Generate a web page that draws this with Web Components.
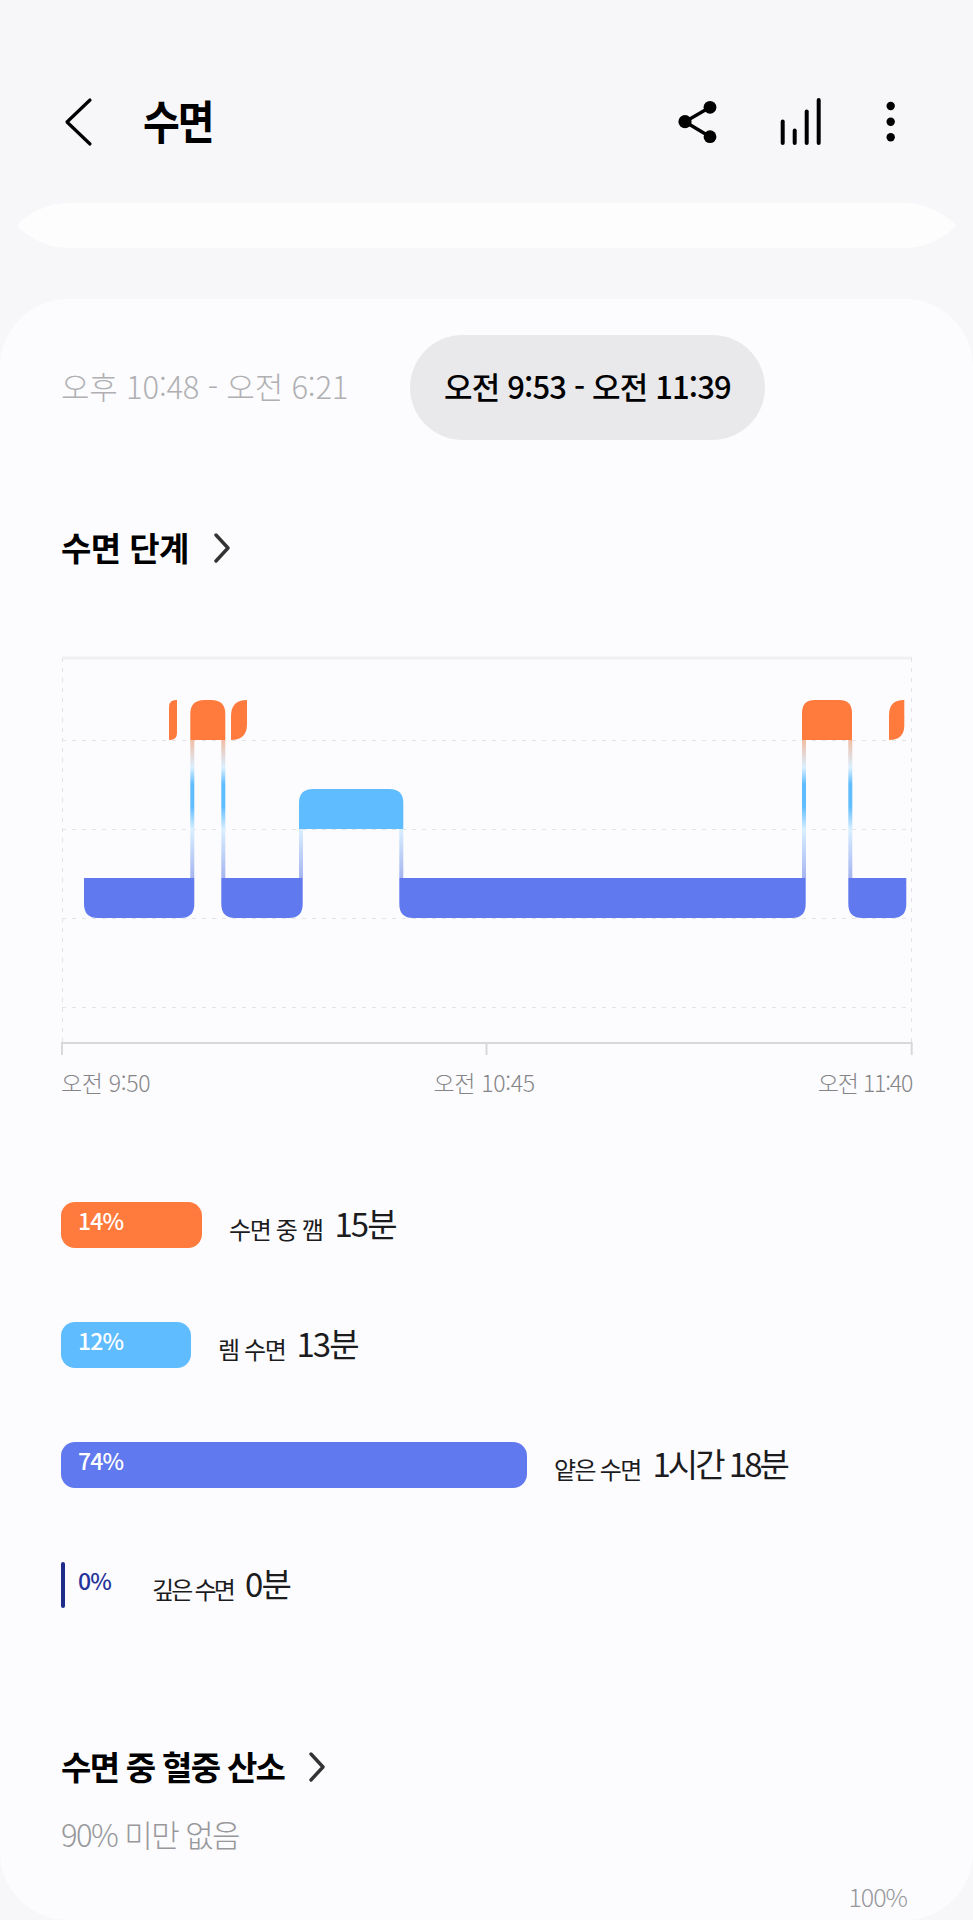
<!DOCTYPE html>
<html lang="ko">
<head>
<meta charset="utf-8">
<title>수면</title>
<style>
  html, body { margin: 0; height: 1920px; overflow: hidden; background: #f7f7f9; }
  body { font-family: "Noto Sans CJK KR", "Noto Sans", sans-serif; color: #000; }
</style>
</head>
<body>
<sleep-page>
  <top-bar slot="top">수면</top-bar>
  <session-tabs>
    <span slot="off">오후 10:48 - 오전 6:21</span>
    <span slot="on">오전 9:53 - 오전 11:39</span>
  </session-tabs>
  <section-title style="margin-top:88px;letter-spacing:-.6px">수면 단계</section-title>
  <stage-chart></stage-chart>
  <stage-row style="margin-top:105px" box="141" fill="141" color="#ff7a3d" pct="14%" label="수면 중 깸" value="15분"></stage-row>
  <stage-row box="130" fill="130" color="#5fbcff" pct="12%" label="렘 수면" value="13분" gap="11"></stage-row>
  <stage-row box="466" fill="466" color="#6079ee" pct="74%" label="얕은 수면" value="1시간 18분" tight="-3" squeeze="-1.7"></stage-row>
  <stage-row box="64" fill="4" color="#1f2d8a" pct="0%" ink="#25349a" label="깊은 수면" value="0분" squeeze="-2.8"></stage-row>
  <section-title style="margin-top:139px;letter-spacing:-1.7px">수면 중 혈중 산소</section-title>
  <note-line>90% 미만 없음</note-line>
  <scale-end>100%</scale-end>
</sleep-page>

<script>
'use strict';

class SleepPage extends HTMLElement {
  constructor() {
    super();
    this.attachShadow({ mode: 'open' }).innerHTML = `
      <style>
        :host { display: block; }
        .strip { height: 45px; margin: 0 16px 51px; background: #fdfdfe;
                 clip-path: path("M54 0 H887 C910 0 927 10 938 20 Q941 22.5 938 25 C927 35 910 45 887 45 H54 C31 45 14 35 3 25 Q0 22.5 3 20 C14 10 31 0 54 0Z"); }
        .card { height: 1621px; box-sizing: border-box; padding: 36px 60px 0 61px; background: #fcfcfe;
                border-radius: 68px; display: flex; flex-direction: column; overflow: hidden; }
      </style>
      <slot name="top"></slot>
      <div class="strip"></div>
      <div class="card"><slot></slot></div>`;
  }
}

class TopBar extends HTMLElement {
  constructor() {
    super();
    this.attachShadow({ mode: 'open' }).innerHTML = `
      <style>
        :host { display: block; height: 203px; box-sizing: border-box; padding-top: 82px; }
        .row { display: flex; align-items: center; height: 80px; padding-left: 60px; }
        .title { margin-left: 47px; font-size: 40px; font-weight: 700; letter-spacing: -2px; line-height: 76px; height: 80px; transform: scaleY(1.15); }
        svg { display: block; }
        .back { width: 36px; height: 60px; }
        .acts { margin-left: auto; margin-right: 68px; width: 230px; height: 60px; }
      </style>
      <div class="row">
        <svg class="back" viewBox="0 0 36 60" fill="none" stroke="#000" stroke-width="3.2" stroke-linecap="round" stroke-linejoin="round">
          <path d="M30 8 L7 30 L30 52"/>
        </svg>
        <span class="title"><slot></slot></span>
        <svg class="acts" viewBox="0 0 230 60">
          <g stroke="#000" stroke-width="3.4" fill="none">
            <path d="M35 15.3 L10 29.7 L35 44.7"/>
          </g>
          <g fill="#000">
            <circle cx="35" cy="15.3" r="6.4"/><circle cx="10" cy="29.7" r="6.6"/><circle cx="35" cy="44.7" r="6.4"/>
          </g>
          <g stroke="#000" stroke-width="4" stroke-linecap="round">
            <path d="M107.7 29.5 V51"/><path d="M119.7 38.5 V51"/><path d="M131.7 19.5 V51"/><path d="M143.7 8 V51"/>
          </g>
          <g fill="#000">
            <circle cx="215.7" cy="14" r="4.2"/><circle cx="215.7" cy="29.7" r="4.2"/><circle cx="215.7" cy="45.3" r="4.2"/>
          </g>
        </svg>
      </div>`;
  }
}

class SessionTabs extends HTMLElement {
  constructor() {
    super();
    this.attachShadow({ mode: 'open' }).innerHTML = `
      <style>
        :host { display: flex; align-items: center; height: 105px; flex: none; font-size: 31px; }
        .off { color: #b0b0b3; width: 349px; font-weight: 300; white-space: nowrap; letter-spacing: -.2px; padding-bottom: 4px; }
        .on { width: 355px; height: 101px; padding-bottom: 4px; background: #e9e9eb; border-radius: 52.5px; display: flex;
              align-items: center; justify-content: center; font-weight: 500; white-space: nowrap; letter-spacing: -.85px; }
      </style>
      <span class="off"><slot name="off"></slot></span>
      <span class="on"><slot name="on"></slot></span>`;
  }
}

class SectionTitle extends HTMLElement {
  constructor() {
    super();
    this.attachShadow({ mode: 'open' }).innerHTML = `
      <style>
        :host { display: flex; align-items: center; height: 40px; flex: none; font-size: 33px; font-weight: 700; letter-spacing: -1px; white-space: nowrap; }
        span { margin-top: -2px; }
        svg { width: 18px; height: 30px; margin-left: 24px; flex: none; }
      </style>
      <span><slot></slot></span>
      <svg viewBox="0 0 18 30" fill="none" stroke="#333" stroke-width="3.4" stroke-linecap="round" stroke-linejoin="round">
        <path d="M3 2 L15 15 L3 28"/>
      </svg>`;
  }
}

// rounded box: radii go tl, tr, br, bl
function box(x0, x1, y0, y1, [tl, tr, br, bl]) {
  return `M${x0 + tl} ${y0} H${x1 - tr} Q${x1} ${y0} ${x1} ${y0 + tr} V${y1 - br} Q${x1} ${y1} ${x1 - br} ${y1} H${x0 + bl} Q${x0} ${y1} ${x0} ${y1 - bl} V${y0 + tl} Q${x0} ${y0} ${x0 + tl} ${y0}Z`;
}

const ORANGE = '#ff7a3d', SKY = '#5fbcff', INDIGO = '#6079ee';
// coordinates are relative to the svg, which starts at 61,656 on the page
const SEGMENTS = [
  [108, 116, 44, 84, [7, 0, 7, 0], ORANGE],
  [129.3, 164.3, 44, 84, [14, 14, 0, 0], ORANGE],
  [170, 186, 44, 84, [16, 0, 16, 0], ORANGE],
  [741, 791, 44, 84, [13, 13, 0, 0], ORANGE],
  [828, 843.3, 44, 84, [15, 0, 15, 0], ORANGE],
  [238, 342.3, 133, 173, [14, 14, 0, 0], SKY],
  [23, 133.3, 222, 262, [0, 0, 14, 14], INDIGO],
  [160.3, 241.7, 222, 262, [0, 0, 14, 14], INDIGO],
  [338.3, 744.7, 222, 262, [0, 0, 14, 14], INDIGO],
  [787.3, 845.3, 222, 262, [0, 0, 14, 14], INDIGO],
];
const LONG_LINKS = [129.3, 160.3, 741, 787.3];
const SHORT_LINKS = [238, 338.3];

class StageChart extends HTMLElement {
  constructor() {
    super();
    const grid = [84, 173, 262, 351].map(y => `<path d="M1 ${y}.5 H851"/>`).join('');
    const segs = SEGMENTS.map(([x0, x1, y0, y1, r, c]) => `<path d="${box(x0, x1, y0, y1, r)}" fill="${c}"/>`).join('');
    const long = LONG_LINKS.map(x => `<rect x="${x}" y="84" width="4" height="138" fill="url(#long)"/>`).join('');
    const short = SHORT_LINKS.map(x => `<rect x="${x}" y="173" width="4" height="49" fill="url(#short)"/>`).join('');
    this.attachShadow({ mode: 'open' }).innerHTML = `
      <style>
        :host { display: block; margin-top: 88px; flex: none; }
        svg { display: block; width: 852px; height: 400px; }
        .axis { display: flex; justify-content: space-between; width: 851px; height: 30px; margin-top: 11px;
                font-size: 23px; line-height: 30px; letter-spacing: -.3px; color: #858588; font-weight: 300; }
        .axis span:last-child { letter-spacing: -1.2px; }
      </style>
      <svg viewBox="0 0 852 400">
        <defs>
          <linearGradient id="long" x1="0" y1="0" x2="0" y2="1">
            <stop offset="0" stop-color="#f2bda4"/><stop offset=".2" stop-color="#d9efff"/>
            <stop offset=".32" stop-color="#5fbcff"/><stop offset=".48" stop-color="#5fbcff"/>
            <stop offset=".65" stop-color="#d9efff"/><stop offset="1" stop-color="#a5b4f0"/>
          </linearGradient>
          <linearGradient id="short" x1="0" y1="0" x2="0" y2="1">
            <stop offset="0" stop-color="#d9efff"/><stop offset="1" stop-color="#a5b4f0"/>
          </linearGradient>
        </defs>
        <path d="M1 2 H851" stroke="#f0f0f3" stroke-width="3"/>
        <g stroke="#e3e3e7" stroke-width="1" stroke-dasharray="4 6" fill="none">
          ${grid}
          <path d="M1.5 2 V387"/><path d="M850.5 2 V387"/>
        </g>
        ${long}${short}${segs}
        <g stroke="#d8d8db" stroke-width="2" fill="none">
          <path d="M0 387 H851.5"/><path d="M1 387 V399"/><path d="M425.5 387 V399"/><path d="M850.7 387 V399"/>
        </g>
      </svg>
      <div class="axis"><span>오전 9:50</span><span>오전 10:45</span><span>오전 11:40</span></div>`;
  }
}

class StageRow extends HTMLElement {
  constructor() {
    super();
    this.attachShadow({ mode: 'open' }).innerHTML = `
      <style>
        :host { display: flex; align-items: center; height: 46px; margin-top: 74px; flex: none; white-space: nowrap; }
        .box { position: relative; height: 46px; flex: none; }
        .fill { height: 46px; border-radius: 14px; }
        .pct { position: absolute; left: 17px; top: 3px; font-size: 23px; line-height: 30px; font-weight: 500; letter-spacing: -.9px; color: #fff; }
        .label { margin-left: 27px; font-size: 24px; letter-spacing: -1.4px; color: #1c1c1e; font-weight: 400; padding-top: 6px; }
        .value { margin-left: 12px; font-size: 33px; letter-spacing: -1.9px; color: #1c1c1e; font-weight: 400; margin-top: -4px; }
      </style>
      <div class="box"><div class="fill"></div><span class="pct"></span></div>
      <span class="label"></span><span class="value"></span>`;
  }
  connectedCallback() {
    const s = this.shadowRoot;
    s.querySelector('.box').style.width = this.getAttribute('box') + 'px';
    const fill = s.querySelector('.fill');
    fill.style.width = this.getAttribute('fill') + 'px';
    fill.style.background = this.getAttribute('color');
    if (+this.getAttribute('fill') < 10) fill.style.borderRadius = '2px';
    const pct = s.querySelector('.pct');
    pct.textContent = this.getAttribute('pct');
    if (this.hasAttribute('ink')) pct.style.color = this.getAttribute('ink');
    const label = s.querySelector('.label');
    label.textContent = this.getAttribute('label');
    if (this.hasAttribute('squeeze')) label.style.letterSpacing = this.getAttribute('squeeze') + 'px';
    const value = s.querySelector('.value');
    value.textContent = this.getAttribute('value');
    if (this.hasAttribute('tight')) value.style.letterSpacing = this.getAttribute('tight') + 'px';
    if (this.hasAttribute('gap')) value.style.marginLeft = this.getAttribute('gap') + 'px';
  }
}

class NoteLine extends HTMLElement {
  constructor() {
    super();
    this.attachShadow({ mode: 'open' }).innerHTML = `
      <style>:host { display: block; margin-top: 28px; height: 38px; flex: none; font-size: 31px; line-height: 38px; font-weight: 300; color: #98989b; letter-spacing: -1.6px; }</style>
      <slot></slot>`;
  }
}

class ScaleEnd extends HTMLElement {
  constructor() {
    super();
    this.attachShadow({ mode: 'open' }).innerHTML = `
      <style>:host { display: block; margin-top: 28px; margin-right: 6px; height: 30px; flex: none; text-align: right; font-size: 25px; line-height: 30px; font-weight: 300; color: #98989b; letter-spacing: -1px; }</style>
      <slot></slot>`;
  }
}

customElements.define('sleep-page', SleepPage);
customElements.define('top-bar', TopBar);
customElements.define('session-tabs', SessionTabs);
customElements.define('section-title', SectionTitle);
customElements.define('stage-chart', StageChart);
customElements.define('stage-row', StageRow);
customElements.define('note-line', NoteLine);
customElements.define('scale-end', ScaleEnd);
</script>
</body>
</html>
